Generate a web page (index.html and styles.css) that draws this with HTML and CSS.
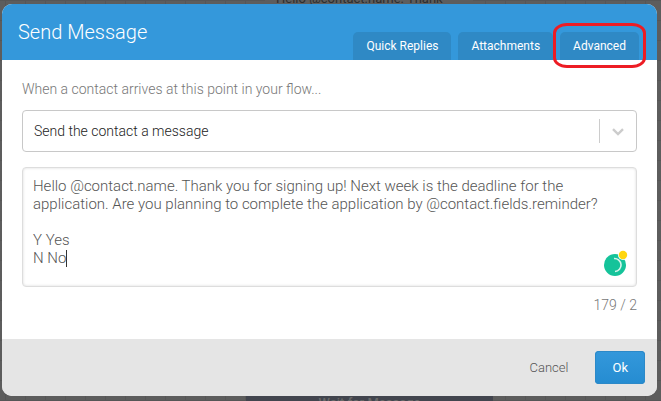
FILE: index.html
```html
<!DOCTYPE html>
<html lang="en">
<head>
    <meta charset="UTF-8">
    <meta name="viewport" content="width=device-width, initial-scale=1.0">
    <title>Send Message</title>
    <link rel="stylesheet" href="styles.css">
</head>
<body>
    <!-- flow canvas behind the dialog -->
    <div class="canvas">
        <div class="node node-message">Hello @contact.name. Thank</div>
        <div class="node node-wait">Wait for Message</div>
    </div>

    <form class="dialog">
        <header class="header">
            <h1>Send Message</h1>
            <nav class="tabs">
                <button type="button" class="tab">Quick Replies</button>
                <button type="button" class="tab">Attachments</button>
                <button type="button" class="tab marked">Advanced</button>
            </nav>
        </header>

        <div class="content">
            <label class="intro" for="action">When a contact arrives at this point in your flow...</label>
            <div class="select">
                <select id="action">
                    <option>Send the contact a message</option>
                </select>
                <svg class="chevron" width="12" height="8" viewBox="0 0 12 8">
                    <path d="M1 1.2l5 4.8 5-4.8" fill="none" stroke="#ccc" stroke-width="2.4"/>
                </svg>
            </div>

            <div class="compose">
                <textarea id="message" aria-label="Message" spellcheck="false">Hello @contact.name. Thank you for signing up! Next week is the deadline for the
application. Are you planning to complete the application by @contact.fields.reminder?

Y Yes
N No</textarea>
                <span class="caret"></span>
                <svg class="checker" width="25" height="27" viewBox="0 0 25 27">
                    <circle cx="12" cy="15" r="11" fill="#15c39a"/>
                    <path d="M11 8.500a6.500 6.500 0 1 1 1 13" fill="none" stroke="#d5f5ec" stroke-width="1.600"/>
                    <circle cx="20" cy="5" r="5" fill="#fff"/>
                    <circle cx="20" cy="5" r="4.200" fill="#ffd60f"/>
                </svg>
            </div>
            <div class="counter">179 / 2</div>
        </div>

        <footer class="footer">
            <button type="button" class="btn">Cancel</button>
            <button type="submit" class="btn primary">Ok</button>
        </footer>
    </form>
</body>
</html>
```
FILE: styles.css
```css
* {
    box-sizing: border-box;
}
body {
    margin: 0;
    min-height: 100vh;
    padding: 4px 4px 5px 2px;
    font-family: Roboto, sans-serif;
    font-size: 14px;
    font-weight: 300;
    color: #666;
    background-color: #5d5d5d;
    background-image:
        linear-gradient(to right, #565656 1px, transparent 1px),
        linear-gradient(#565656 1px, transparent 1px);
    background-size: 20px 20px;
    background-position: 5px 0;
}
h1 {
    margin: 0;
    font-size: 20px;
    font-weight: 300;
    line-height: 24px;
    color: #fff;
}
button, select, textarea {
    font: inherit;
}

.canvas {
    position: fixed;
    inset: 0;
    overflow: hidden;
}
.node {
    position: absolute;
    white-space: nowrap;
    font-size: 13px;
}
.node-message {
    left: 265px;
    top: -9px;
    width: 208px;
    padding-left: 11px;
    line-height: 16px;
    font-weight: 400;
    color: #2d2d2d;
    background: #5d5d5d;
}
.node-wait {
    left: 246px;
    top: 393px;
    width: 247px;
    line-height: 20px;
    font-weight: 500;
    text-align: center;
    color: #696969;
    background: #42454e;
}

.dialog {
    position: relative;
    border-radius: 10px;
    background: #fff;
}
.header {
    display: flex;
    justify-content: space-between;
    padding: 0 18px 0 16px;
    border-radius: 10px 10px 0 0;
    background: #3498db;
}
.header h1 {
    padding: 16px 0;
}
.tabs {
    display: flex;
    align-items: flex-end;
    gap: 7px;
}
.tab {
    position: relative;
    height: 28px;
    padding: 0 13px;
    border: none;
    border-radius: 5px 5px 0 0;
    font-size: 12px;
    font-weight: 400;
    color: #fff;
    background: #2f89c5;
    cursor: pointer;
}
/* hand-drawn style highlight round the tab */
.marked::after {
    content: "";
    position: absolute;
    inset: -9px -7px -8px;
    border: 3px solid #ed1c24;
    border-radius: 14px / 10px;
}

.content {
    padding: 20px 20px 25px;
}
.intro {
    display: block;
    line-height: 18px;
    margin-bottom: 12px;
    color: #777;
}
.select {
    position: relative;
    margin-bottom: 15px;
}
.select select {
    display: block;
    width: 100%;
    height: 42px;
    padding: 0 60px 0 11px;
    border: 1px solid #c8c8c8;
    border-radius: 4px;
    appearance: none;
    color: #222;
    background: #fff;
}
.select::after {
    content: "";
    position: absolute;
    top: 9px;
    right: 37px;
    width: 1px;
    height: 24px;
    background: #ccc;
}
.chevron {
    position: absolute;
    top: 18px;
    right: 13px;
}

.compose {
    position: relative;
}
.compose textarea {
    display: block;
    width: 100%;
    height: 120px;
    padding: 9px 10px;
    border: 1px solid #ddd;
    border-radius: 4px;
    outline: none;
    resize: none;
    font-size: 15px;
    line-height: 18px;
    color: #555;
    box-shadow: inset 0 0 3px rgba(0, 0, 0, 0.15);
}
.caret {
    position: absolute;
    left: 44px;
    top: 83px;
    width: 1px;
    height: 17px;
    background: #333;
}
.checker {
    position: absolute;
    right: 9px;
    bottom: 10px;
}
.counter {
    margin-top: 9px;
    line-height: 18px;
    text-align: right;
    color: #777;
}

.footer {
    display: flex;
    justify-content: flex-end;
    gap: 10px;
    padding: 12px;
    border-radius: 0 0 10px 10px;
    background: #e5e5e5;
}
.btn {
    height: 33px;
    padding: 0 17px;
    border: none;
    border-radius: 4px;
    font-size: 13px;
    color: #555;
    background: none;
    cursor: pointer;
}
.primary {
    font-weight: 400;
    color: #fff;
    background: linear-gradient(#3498db, #258cd1);
    box-shadow: inset 0 0 0 1px #2c89c8;
}
```
